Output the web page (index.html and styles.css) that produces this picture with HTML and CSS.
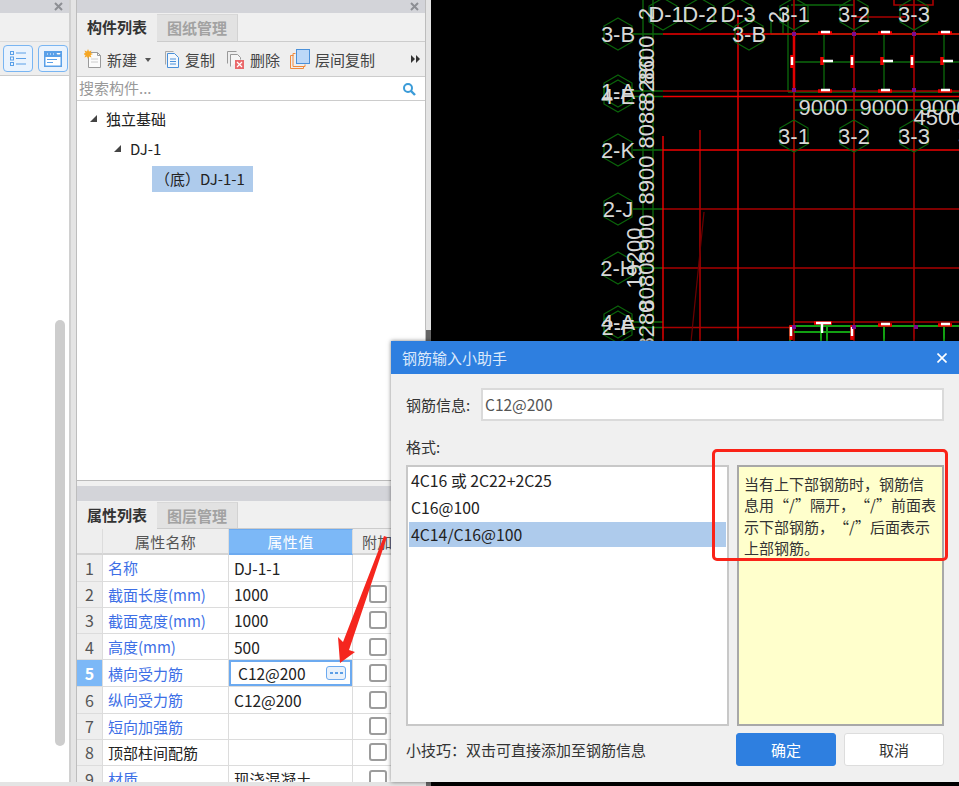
FILE: index.html
```html
<!DOCTYPE html>
<html lang="zh-CN">
<head>
    <meta charset="UTF-8">
    <meta name="viewport" content="width=device-width, initial-scale=1.0">
    <title>钢筋输入小助手</title>
    <link rel="stylesheet" href="styles.css">
</head>
<body>
    <div class="app">
        <!-- left dock -->
        <div class="side-panel">
            <div class="title-bar">
                <svg class="close-x" width="9" height="9" viewBox="0 0 9 9"><path d="M1 1l7 7M8 1l-7 7"/></svg>
            </div>
            <div class="side-tabs"></div>
            <div class="side-tools">
                <span class="view-btn">
                    <svg width="30" height="27" viewBox="0 0 30 27">
                        <g class="ico-blue-line">
                            <rect x="7.500" y="6.500" width="3" height="3"/><rect x="7.500" y="12" width="3" height="3"/><rect x="7.500" y="17.500" width="3" height="3"/>
                            <path d="M13 8h10M13 13.500h10M13 19h10"/>
                        </g>
                    </svg>
                </span>
                <span class="view-btn">
                    <svg width="30" height="27" viewBox="0 0 30 27">
                        <rect class="ico-blue-fill" x="6" y="6" width="18" height="16"/>
                        <rect x="7.500" y="12" width="15" height="8.500" fill="#fff"/>
                        <path d="M9 9h1M12 9h1M15 9h1M19 8.500h3l-1.500 1.500z" stroke="#fff"/>
                        <path class="ico-blue-line" d="M9 14.500h10M9 17.500h6"/>
                    </svg>
                </span>
            </div>
            <div class="side-body"><div class="scroll-thumb"></div></div>
        </div>

        <!-- component list + properties -->
        <div class="mid-panel">
            <div class="title-bar">
                <svg class="close-x" width="9" height="9" viewBox="0 0 9 9"><path d="M1 1l7 7M8 1l-7 7"/></svg>
            </div>
            <div class="tabs">
                <span class="tab tab-on">构件列表</span>
                <span class="tab">图纸管理</span>
            </div>
            <div class="toolbar">
                <span class="tool tool-new">
                    <svg width="20" height="20" viewBox="0 0 20 20">
                        <path d="M4.500 3.500h9l3 3v12h-12z" fill="#fbfbfb" stroke="#9a9a9a"/>
                        <path d="M13.500 3.500v3h3" fill="none" stroke="#9a9a9a"/>
                        <path d="M7 10h7M7 13h7" stroke="#ccc"/>
                        <path d="M4 0l1 2.500 2.500-1-1 2.500 2.500 1-2.500 1 1 2.500-2.500-1-1 2.500-1-2.500-2.500 1 1-2.500-2.500-1 2.500-1-1-2.500 2.500 1z" fill="#f5a623"/>
                    </svg>
                    新建<i class="caret"></i>
                </span>
                <span class="tool tool-copy">
                    <svg width="16" height="19" viewBox="0 0 16 19">
                        <path d="M1.500 14.500v-13h8" fill="none" stroke="#aaa"/>
                        <path d="M3.500 3.500h7l4 4v10h-11z" fill="#f3f8fd" stroke="#4a90d9"/>
                        <path d="M6 9h6M6 11.500h6M6 14h6" stroke="#4a90d9"/>
                    </svg>
                    复制
                </span>
                <span class="tool tool-del">
                    <svg width="19" height="19" viewBox="0 0 19 19">
                        <path d="M1.500 13.500v-12h9" fill="none" stroke="#999"/>
                        <path d="M4.500 16.500v-12h7l3 3v2" fill="#f6f6f6" stroke="#999"/>
                        <rect x="9" y="10" width="9" height="9" fill="#e9686a"/>
                        <path d="M11 12l5 5M16 12l-5 5" stroke="#fff" stroke-width="1.200"/>
                    </svg>
                    删除
                </span>
                <span class="tool tool-floor">
                    <svg width="20" height="20" viewBox="0 0 20 20">
                        <path d="M3.500 6.500h-3v13h13v-2" fill="none" stroke="#f08a3c"/>
                        <path d="M5.500 4.500h-2.500v13h12v-2" fill="none" stroke="#f08a3c"/>
                        <rect x="6.500" y="0.500" width="13" height="14" fill="#bcd8f8" stroke="#4a90d9"/>
                    </svg>
                    层间复制
                </span>
                <svg class="more" width="9" height="8" viewBox="0 0 9 8"><path d="M0 0l4 4-4 4zM5 0l4 4-4 4z"/></svg>
            </div>
            <div class="search">
                <span class="search-hint">搜索构件...</span>
                <svg width="14" height="14" viewBox="0 0 14 14">
                    <circle cx="6" cy="6" r="4" fill="none" stroke="#3a9bd8" stroke-width="2"/>
                    <path d="M9 9l4 4" stroke="#3a9bd8" stroke-width="2.400"/>
                </svg>
            </div>
            <div class="tree">
                <div class="tree-row level-1"><i class="tree-arrow"></i>独立基础</div>
                <div class="tree-row level-2"><i class="tree-arrow"></i>DJ-1</div>
                <div class="tree-row level-3"><span class="tree-sel">&#xFF08;底&#xFF09;DJ-1-1</span></div>
            </div>

            <div class="title-bar title-bar-low"></div>
            <div class="tabs tabs-low">
                <span class="tab tab-on">属性列表</span>
                <span class="tab">图层管理</span>
            </div>
            <div class="props">
                <table class="prop-table">
                    <colgroup><col class="c-num"><col class="c-name"><col class="c-val"><col class="c-add"></colgroup>
                    <tr>
                        <th></th><th>属性名称</th><th class="th-on">属性值</th><th class="th-add">附加</th>
                    </tr>
                    <tr>
                        <td class="num">1</td><td class="name">名称</td><td class="val">DJ-1-1</td><td></td>
                    </tr>
                    <tr>
                        <td class="num">2</td><td class="name">截面长度(mm)</td><td class="val">1000</td><td><i class="check"></i></td>
                    </tr>
                    <tr>
                        <td class="num">3</td><td class="name">截面宽度(mm)</td><td class="val">1000</td><td><i class="check"></i></td>
                    </tr>
                    <tr>
                        <td class="num">4</td><td class="name">高度(mm)</td><td class="val">500</td><td><i class="check"></i></td>
                    </tr>
                    <tr>
                        <td class="num num-on">5</td><td class="name">横向受力筋</td>
                        <td class="val-edit">
                            <div class="edit-box">C12@200
                                <span class="dots-btn">
                                    <svg width="18" height="12" viewBox="0 0 18 12"><path d="M3 5h3v2h-3zM8 5h3v2h-3zM13 5h3v2h-3z"/></svg>
                                </span>
                            </div>
                        </td>
                        <td><i class="check"></i></td>
                    </tr>
                    <tr>
                        <td class="num">6</td><td class="name">纵向受力筋</td><td class="val">C12@200</td><td><i class="check"></i></td>
                    </tr>
                    <tr>
                        <td class="num">7</td><td class="name">短向加强筋</td><td class="val"></td><td><i class="check"></i></td>
                    </tr>
                    <tr>
                        <td class="num">8</td><td class="name name-plain">顶部柱间配筋</td><td class="val"></td><td><i class="check"></i></td>
                    </tr>
                    <tr>
                        <td class="num">9</td><td class="name">材质</td><td class="val">现浇混凝土</td><td><i class="check"></i></td>
                    </tr>
                </table>
            </div>
        </div>

        <div class="splitter"></div>

        <!-- drawing canvas -->
        <div class="cad">
            <svg class="cad-svg" width="529" height="786" viewBox="430 0 529 786">
                <defs>
                    <polygon id="hex" class="hex" points="0,-16 14,-8 14,8 0,16 -14,8 -14,-8"/>
                </defs>

                <g class="ln-green-dim">
                    <path d="M642 0V342M652 0V342"/>
                    <path d="M632 34H662M632 91H662M632 96.500H662M632 150H662M632 209H662M632 268H662M632 322H662M632 327.500H662"/>
                    <path d="M787 5V92M770 20V34M782 20V34M770 34H793M790 5H853"/>
                    <path d="M793 34H959M793 62H959M787 92H959M793 100H959M793 110H959"/>
                    <path d="M823 34V92M883 34V92M943 34V92M793 92V150M853 92V150M913 92V150"/>
                </g>
                <g class="ln-red-dark">
                    <path d="M699 130V342M793 0V342M853 0V342M913 0V342"/>
                    <path d="M662 91H959M662 209H959M662 268H959M662 327.500H793M793 322H959"/>
                    <path d="M853 17H905M893 0V5H932V0"/>
                </g>
                <path class="ln-slant" d="M703 212L690 342"/>
                <g class="ln-red">
                    <path d="M662 136V342M737 10V342"/>
                    <path d="M662 34H959M662 96.500H959M662 150H959"/>
                </g>
                <path class="ln-red-thick" d="M793 34V92"/>
                <g class="ln-green">
                    <path d="M793 326H959M789 326V342M793 332H850M820 326V342M826 326V342M883 326V342M943 326V342"/>
                </g>

                <!-- rebar ticks -->
                <g class="ln-tick-red">
                    <path d="M817 33H831M877 33H891M937 33H951M817 91H831M877 91H891M937 91H951"/>
                    <path d="M791 55V68M851 55V68M911 55V68M821 57V65M881 57V65M941 57V65"/>
                    <path d="M790 325V340M851 325V340M813 323H831M877 325H891M937 325H951"/>
                </g>
                <g class="ln-tick-white">
                    <path d="M820 32H829M880 32H889M940 32H949M820 90H829M880 90H889M940 90H949"/>
                    <path d="M791 57V65M851 57V65M911 57V65"/>
                    <path d="M822 61H832M882 61H892M942 61H952"/>
                    <path d="M790 327V336M851 327V336M815 323H830M821 323V333M880 324H889M940 324H949"/>
                </g>
                <g class="pt-purple">
                    <rect x="791" y="32" width="4" height="4"/><rect x="851" y="32" width="4" height="4"/><rect x="911" y="32" width="4" height="4"/>
                    <rect x="791" y="88" width="4" height="4"/><rect x="851" y="88" width="4" height="4"/><rect x="911" y="88" width="4" height="4"/>
                    <rect x="791" y="325" width="4" height="4"/><rect x="851" y="325" width="4" height="4"/><rect x="913" y="325" width="4" height="4"/>
                </g>

                <use href="#hex" x="617" y="34"/><use href="#hex" x="748" y="34"/>
                <use href="#hex" x="662" y="14"/><use href="#hex" x="699" y="14"/><use href="#hex" x="737" y="14"/>
                <use href="#hex" x="793" y="14"/><use href="#hex" x="853" y="14"/><use href="#hex" x="913" y="14"/>
                <use href="#hex" x="617" y="91"/><use href="#hex" x="617" y="96"/>
                <use href="#hex" x="793" y="136"/><use href="#hex" x="853" y="136"/><use href="#hex" x="913" y="136"/><use href="#hex" x="973" y="136"/>
                <use href="#hex" x="617" y="150"/><use href="#hex" x="617" y="209"/><use href="#hex" x="617" y="268"/>
                <use href="#hex" x="617" y="322"/><use href="#hex" x="617" y="327"/>

                <g class="cad-text">
                    <text x="617" y="34">3-B</text><text x="748" y="34">3-B</text>
                    <text x="665" y="14">D-1</text><text x="699" y="14">D-2</text><text x="737" y="14">D-3</text>
                    <text x="793" y="14">3-1</text><text x="853" y="14">3-2</text><text x="913" y="14">3-3</text>
                    <text x="617" y="91">1-A</text><text x="617" y="96">4-E</text>
                    <text x="793" y="136">3-1</text><text x="853" y="136">3-2</text><text x="913" y="136">3-3</text><text x="973" y="136">3-4</text>
                    <text x="617" y="150">2-K</text><text x="617" y="209">2-J</text><text x="617" y="268">2-H</text>
                    <text x="617" y="322">4-A</text><text x="617" y="327">2-F</text>
                    <text x="822" y="107">9000</text><text x="883" y="107">9000</text><text x="943" y="107">9000</text><text x="937" y="117">4500</text>
                    <text transform="translate(645 60) rotate(-90)">8600</text>
                    <text transform="translate(645 80) rotate(-90)">8280</text>
                    <text transform="translate(645 124) rotate(-90)">8088</text>
                    <text transform="translate(645 180) rotate(-90)">8900</text>
                    <text transform="translate(645 239) rotate(-90)">8900</text>
                    <text transform="translate(645 287) rotate(-90)">8080</text>
                    <text transform="translate(645 325) rotate(-90)">8280</text>
                    <text transform="translate(633 258) rotate(-90)">19200</text>
                    <text transform="translate(645 14) rotate(-90)">2</text>
                    <text transform="translate(775 17) rotate(-90)">2</text>
                </g>
            </svg>
        </div>

        <!-- rebar helper dialog -->
        <div class="dialog">
            <div class="dialog-head">
                <span>钢筋输入小助手</span>
                <svg width="10" height="10" viewBox="0 0 10 10"><path d="M0.500 0.500l9 9M9.500 0.500l-9 9" stroke="#fff" stroke-width="1.600"/></svg>
            </div>
            <div class="dialog-body">
                <div class="info-row">
                    <label>钢筋信息:</label>
                    <div class="info-input">C12@200</div>
                </div>
                <div class="format-label">格式:</div>
                <div class="format-row">
                    <ul class="format-list">
                        <li>4C16 或 2C22+2C25</li>
                        <li>C16@100</li>
                        <li class="format-on">4C14/C16@100</li>
                    </ul>
                    <div class="hint-box">当有上下部钢筋时&#xFF0C;钢筋信<br>息用<span class="quoted">“/”</span>隔开&#xFF0C;<span class="quoted">“/”</span>前面表<br>示下部钢筋&#xFF0C;<span class="quoted">“/”</span>后面表示<br>上部钢筋。</div>
                </div>
                <div class="dialog-foot">
                    <span class="tip">小技巧&#xFF1A;双击可直接添加至钢筋信息</span>
                    <button class="btn btn-ok">确定</button>
                    <button class="btn btn-cancel">取消</button>
                </div>
            </div>
        </div>

        <!-- annotations drawn on top of the screenshot -->
        <div class="mark-box"></div>
        <svg class="mark-arrow" width="60" height="130" viewBox="335 535 60 130">
            <polygon points="387,537 349,650 355,652 340,663 338,637 343,642 384,536" fill="#f5261e"/>
        </svg>
    </div>
</body>
</html>
```

FILE: styles.css
```css
* {
    box-sizing: border-box;
    margin: 0;
    padding: 0;
}
body {
    font-family: "Noto Sans CJK SC", "Noto Sans", sans-serif;
    font-size: 15px;
    color: #333;
    background: #e2e2e2;
    overflow: hidden;
    text-spacing-trim: space-all;
}
.app {
    position: relative;
    display: flex;
    width: 959px;
    height: 786px;
    overflow: hidden;
    background: #e4e4e4;
}

/* shared dock parts */
.title-bar {
    position: relative;
    height: 13px;
    flex: none;
    background: #d3d4d9;
}
.close-x {
    position: absolute;
    right: 6px;
    top: 2px;
    fill: none;
    stroke: #8d8f94;
    stroke-width: 2;
}

/* left dock */
.side-panel {
    display: flex;
    flex-direction: column;
    width: 71px;
    height: 782px;
    flex: none;
    border-right: 2px solid #d0d0d0;
    background: #fff;
}
.side-tabs {
    height: 29px;
    flex: none;
    background: #f0f0f0;
    border-bottom: 1px solid #dcdcdc;
}
.side-tools {
    display: flex;
    gap: 5px;
    height: 34px;
    flex: none;
    padding: 3px 0 0 3px;
    background: #eee;
    border-bottom: 1px solid #ccc;
}
.view-btn {
    display: block;
    width: 30px;
    height: 27px;
    background: #eaf3fd;
    border: 1px solid #79b5f2;
    border-radius: 4px;
}
.view-btn svg {
    display: block;
    margin: -1px;
}
.ico-blue-line {
    fill: none;
    stroke: #5aa0e8;
}
.ico-blue-fill {
    fill: #5aa0e8;
}
.side-body {
    flex: 1;
    padding: 244px 0 0 55px;
}
.scroll-thumb {
    width: 10px;
    height: 426px;
    border-radius: 5px;
    background: #cdcdcd;
}

/* middle dock */
.mid-panel {
    display: flex;
    flex-direction: column;
    width: 350px;
    height: 782px;
    flex: none;
    margin-left: 5px;
    overflow: hidden;
    background: #f0f0f0;
    border-left: 1px solid #bdbdbd;
    border-right: 1px solid #bdbdbd;
}
.title-bar-low {
    margin-top: 5px;
    height: 15px;
}
.tabs {
    display: flex;
    height: 28px;
    flex: none;
    margin-top: 1px;
    background: #f0f0f0;
    border-bottom: 1px solid #ccc;
}
.tabs-low {
    height: 27px;
}
.tab {
    width: 81px;
    line-height: 25px;
    text-align: center;
    font-weight: bold;
    color: #a2a2a2;
    background: #e2e2e2;
    border-right: 1px solid #d2d2d2;
    border-top: 1px solid #d8d8d8;
}
.tab-on {
    width: 80px;
    color: #333;
    background: #eee;
    border-right: 0;
    border-top: 0;
    margin-bottom: -1px;
}
.toolbar {
    display: flex;
    align-items: center;
    height: 35px;
    flex: none;
    padding-left: 7px;
    background: #eee;
    border-bottom: 1px solid #ccc;
}
.tool {
    display: flex;
    align-items: center;
    white-space: nowrap;
    color: #444;
}
.tool svg {
    margin-right: 5px;
}
.tool-new svg {
    margin-right: 3px;
}
.caret {
    display: block;
    margin: 2px 0 0 8px;
    border-top: 4px solid #555;
    border-left: 3px solid transparent;
    border-right: 3px solid transparent;
}
.tool-copy {
    margin-left: 13px;
}
.tool-del {
    margin-left: 11px;
}
.tool-floor {
    margin-left: 10px;
}
.more {
    margin-left: 36px;
    fill: #333;
}
.search {
    display: flex;
    align-items: center;
    justify-content: space-between;
    height: 24px;
    flex: none;
    padding: 0 9px 0 2px;
    background: #fff;
    border-bottom: 1px solid #ccc;
}
.search-hint {
    line-height: 20px;
    margin-top: -2px;
    color: #999;
}
.tree {
    height: 380px;
    flex: none;
    padding-top: 3px;
    background: #fff;
    border-bottom: 1px solid #bbb;
    color: #222;
}
.tree-row {
    display: flex;
    align-items: center;
    height: 30px;
    padding-bottom: 2px;
}
.level-1 {
    padding-left: 13px;
}
.level-2 {
    padding-left: 37px;
}
.level-3 {
    padding-left: 75px;
    padding-bottom: 0;
}
.tree-arrow {
    display: block;
    width: 0;
    height: 0;
    margin-right: 9px;
    border-bottom: 7px solid #444;
    border-left: 7px solid transparent;
}
.tree-sel {
    display: block;
    width: 101px;
    height: 26px;
    line-height: 25px;
    padding-left: 3px;
    background: #aecbec;
    white-space: nowrap;
}

/* property grid */
.props {
    flex: 1;
    overflow: hidden;
    background: #fff;
}
.prop-table {
    width: 348px;
    table-layout: fixed;
    border-collapse: separate;
    border-spacing: 0;
}
.c-num {
    width: 26px;
}
.c-name {
    width: 126px;
}
.c-val {
    width: 124px;
}
.prop-table th,
.prop-table td {
    height: 26.250px;
    border-right: 1px solid #dcdcdc;
    border-bottom: 1px solid #dcdcdc;
    white-space: nowrap;
    overflow: hidden;
}
.prop-table th {
    font-weight: normal;
    color: #555;
    background: #eee;
    border-bottom: 2px solid #d4d4d4;
    letter-spacing: 0.3px;
}
.prop-table .th-on {
    color: #fff;
    background: #7cb8f7;
    border-top: 1px solid #6caaf0;
    border-bottom-color: #6caaf0;
}
.prop-table .th-add {
    padding-left: 9px;
    text-align: left;
}
.prop-table .num {
    font-size: 16px;
    text-align: center;
    color: #555;
    background: #eee;
}
.prop-table .num-on {
    color: #fff;
    font-weight: bold;
    background: #7cb8f7;
}
.name {
    padding-left: 5px;
    color: #3d6fe6;
}
.name-plain {
    color: #222;
}
.val {
    padding-left: 5px;
    font-size: 15.500px;
    color: #222;
}
.prop-table .val-edit {
    padding: 0;
}
.edit-box {
    display: flex;
    align-items: center;
    justify-content: space-between;
    height: 26px;
    padding: 0 4px 0 7px;
    font-size: 15.500px;
    border: 2px solid #6caaf0;
    color: #222;
}
.dots-btn {
    display: block;
    width: 20px;
    height: 14px;
    background: #e8f1fb;
    border: 1px solid #6caaf0;
    border-radius: 3px;
}
.dots-btn svg {
    display: block;
    fill: #5b9ee6;
}
.check {
    display: block;
    width: 18px;
    height: 18px;
    margin-left: 16px;
    border: 2px solid #9c9c9c;
    border-radius: 3px;
    background: #fff;
}

.splitter {
    width: 5px;
    flex: none;
    background: linear-gradient(#e4e4e4 330px, #666 330px);
}

/* drawing canvas */
.cad {
    flex: 1;
    background: #000;
}
.cad-svg {
    display: block;
}
.hex {
    fill: none;
    stroke: #0a640a;
    stroke-width: 1.200;
}
.cad-svg path {
    fill: none;
}
.ln-green-dim {
    stroke: #0c6a0c;
    stroke-width: 1.300;
}
.ln-green {
    stroke: #12a012;
    stroke-width: 2;
}
.ln-red {
    stroke: #f00000;
    stroke-width: 1.400;
}
.ln-red-dark {
    stroke: #a80000;
    stroke-width: 1.600;
}
.ln-red-thick {
    stroke: #e00000;
    stroke-width: 2.500;
}
.ln-slant {
    stroke: #6e0000;
    stroke-width: 1.200;
}
.ln-tick-red {
    stroke: #f00000;
    stroke-width: 3.500;
}
.ln-tick-white {
    stroke: #fff;
    stroke-width: 2.400;
}
.pt-purple {
    fill: #7a0a90;
}
.cad-text text {
    font-family: "Liberation Sans", sans-serif;
    font-size: 22px;
    fill: #d8d8d8;
    text-anchor: middle;
    dominant-baseline: central;
}

/* dialog */
.dialog {
    position: absolute;
    left: 391px;
    top: 341px;
    width: 568px;
    height: 441px;
    background: #f0f0f0;
    box-shadow: 0 0 4px rgba(0, 0, 0, 0.5);
}
.dialog-head {
    display: flex;
    align-items: center;
    justify-content: space-between;
    height: 33px;
    padding: 0 12px 0 11px;
    color: #dbe9fb;
    font-size: 15px;
    background: #2e7fe0;
}
.dialog-body {
    padding: 14px 15px 0 15px;
}
.info-row {
    display: flex;
    align-items: center;
}
.info-row label {
    width: 75px;
    font-size: 15px;
}
.info-input {
    width: 463px;
    height: 33px;
    line-height: 28px;
    padding-left: 2px;
    font-size: 15.500px;
    color: #555;
    background: #fff;
    border: 2px solid #dadada;
}
.format-label {
    margin-top: 16px;
    font-size: 15px;
    line-height: 20px;
}
.format-row {
    display: flex;
    gap: 8px;
    margin-top: 8px;
}
.format-list {
    width: 323px;
    height: 261px;
    padding: 0 1px;
    list-style: none;
    background: #fff;
    border: 2px solid #c8c8c8;
}
.format-list li {
    height: 27px;
    line-height: 27px;
    padding-left: 2px;
    font-size: 15.800px;
    color: #222;
}
.format-list .format-on {
    height: 25px;
    line-height: 25px;
    margin-top: 1px;
    background: #aecbec;
}
.hint-box {
    width: 207px;
    height: 261px;
    padding: 6px 0 0 5px;
    font-size: 15px;
    line-height: 21.300px;
    color: #333;
    background: #ffffcc;
    border: 2px solid #a8a8a8;
    white-space: nowrap;
}
.quoted {
    display: inline-block;
    width: 36px;
}
.dialog-foot {
    display: flex;
    align-items: center;
    margin-top: 7px;
}
.tip {
    width: 330px;
}
.btn {
    width: 100px;
    height: 33px;
    font-family: inherit;
    font-size: 15px;
    border-radius: 3px;
}
.btn-ok {
    color: #fff;
    background: #2e7fe0;
    border: 1px solid #2e7fe0;
}
.btn-cancel {
    margin-left: 8px;
    color: #333;
    background: #fff;
    border: 1px solid #ddd;
}

/* annotations */
.mark-box {
    position: absolute;
    left: 712px;
    top: 449px;
    width: 236px;
    height: 112px;
    border: 3px solid #fa2318;
    border-radius: 5px;
}
.mark-arrow {
    position: absolute;
    left: 335px;
    top: 535px;
}
```
